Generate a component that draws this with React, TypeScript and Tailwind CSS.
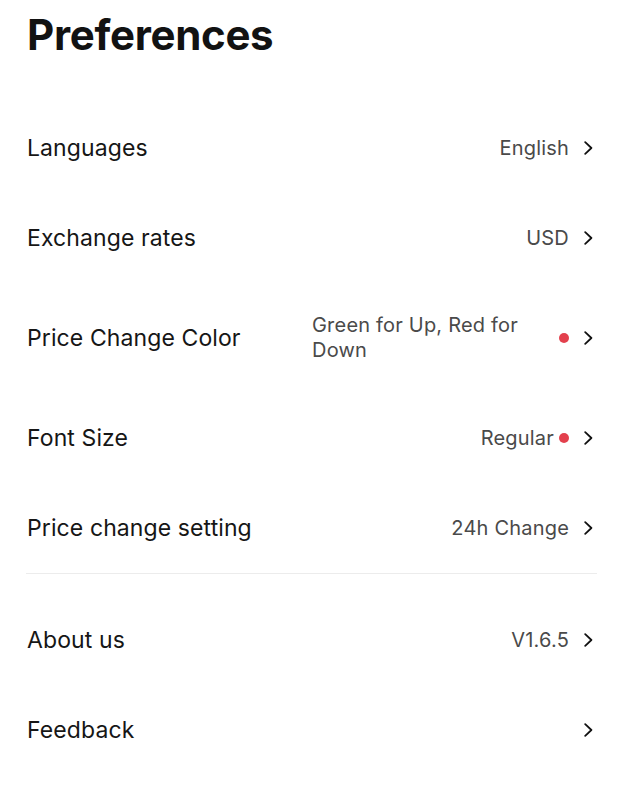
type Row = {
  label: string;
  value?: string;
  dot?: boolean;
  wrap?: boolean;
};

const general: Row[] = [
  { label: "Languages", value: "English" },
  { label: "Exchange rates", value: "USD" },
  { label: "Price Change Color", value: "Green for Up, Red for Down", dot: true, wrap: true },
  { label: "Font Size", value: "Regular", dot: true },
  { label: "Price change setting", value: "24h Change" },
];

const other: Row[] = [
  { label: "About us", value: "V1.6.5" },
  { label: "Feedback" },
];

export default function App() {
  return (
    <div className="min-h-screen bg-white px-[26px] font-['Inter',sans-serif] text-[#121212]">
      <h1 className="pl-[1px] pt-[9px] text-[42px] font-bold leading-[52px] tracking-[-0.3px]">Preferences</h1>
      <div className="mt-[42px]">
        {general.map((r) => (
          <SettingRow key={r.label} row={r} />
        ))}
      </div>
      <div className="border-t border-[#ececec] pt-[21px]">
        {other.map((r) => (
          <SettingRow key={r.label} row={r} />
        ))}
      </div>
    </div>
  );
}

function SettingRow({ row }: { row: Row }) {
  return (
    <div
      className={`flex items-center justify-between pl-[1px] pr-[4px] ${row.wrap ? "h-[110px]" : "h-[90px]"}`}
    >
      <span className="text-[23px] font-normal tracking-[0.1px] text-[#161616]">{row.label}</span>
      <div className="flex items-center">
        {row.value && (
          <span
            className={`text-[20px] leading-[25px] tracking-[0.2px] text-[#4a4a4a] ${row.wrap ? "w-[242px] pr-[26px]" : ""}`}
          >
            {row.value}
          </span>
        )}
        {row.dot && <span className="ml-[5px] h-[10px] w-[10px] rounded-full bg-[#e3404d]" />}
        {/* chevron */}
        <svg
          className="ml-[15px] h-[14px] w-[9px]"
          viewBox="0 0 9 14"
          fill="none"
          stroke="#111"
          strokeWidth={1.8}
          strokeLinecap="round"
          strokeLinejoin="round"
        >
          <path d="M1.2 1.2 7.4 7 1.2 12.8" />
        </svg>
      </div>
    </div>
  );
}
